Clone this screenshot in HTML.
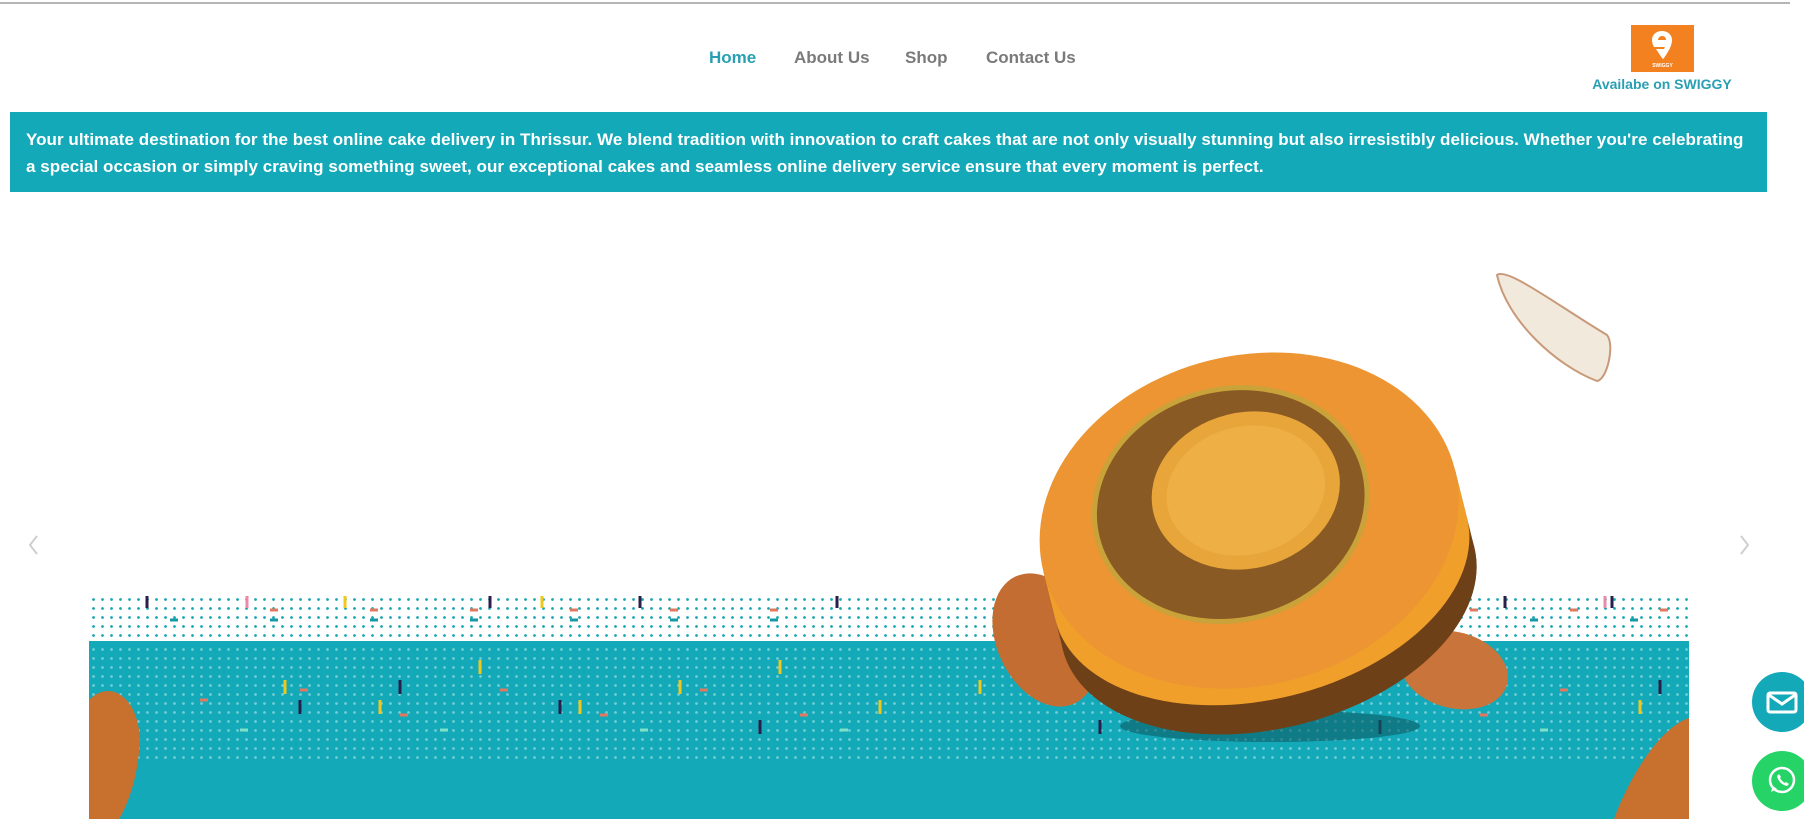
<!DOCTYPE html>
<html><head><meta charset="utf-8"><style>
*{margin:0;padding:0;box-sizing:border-box}
body{width:1804px;height:819px;overflow:hidden;background:#fff;font-family:"Liberation Sans",sans-serif;position:relative}
.topline{position:absolute;left:0;top:2px;width:1790px;height:2px;background:#b5b5b5}
.nav a{position:absolute;top:48px;font-size:17px;font-weight:bold;color:#7a7a7a;text-decoration:none}
.banner{position:absolute;left:10px;top:112px;width:1757px;height:80px;background:#14a9b8;color:#fff;font-weight:bold;font-size:17px;line-height:27px;padding:14px 16px 0 16px;letter-spacing:0.05px}
.swig{position:absolute;left:1631px;top:25px;width:63px;height:47px;background:#f48120}
.avail{position:absolute;left:1580px;top:76px;width:164px;text-align:center;color:#2a9fb3;font-size:14px;font-weight:bold}
.band{position:absolute;left:89px;top:641px;width:1600px;height:178px;background:#13a9b9}
.dots1{position:absolute;left:89px;top:595px;width:1600px;height:46px;
background-image:radial-gradient(circle,#1fa9b5 1.2px,transparent 1.6px);background-size:9px 9px}
.dots2{position:absolute;left:89px;top:645px;width:1600px;height:115px;
background-image:radial-gradient(circle,rgba(255,255,255,.4) 1.2px,transparent 1.6px);background-size:9px 9px}
.circ{position:absolute;width:60px;height:60px;border-radius:50%;left:1752px}
</style></head><body>
<div class="topline"></div>
<div class="nav">
<a style="left:709px;color:#2a9fb3">Home</a>
<a style="left:794px">About Us</a>
<a style="left:905px">Shop</a>
<a style="left:986px">Contact Us</a>
</div>
<div class="swig">
<svg width="63" height="47" viewBox="0 0 63 47"><path d="M31 6c-6 0-10 4-10 9 0 3 1 5 2 7h10c1 0 1 1 0 2h-8l6 9c1 1 2 1 2 0 4-6 8-12 8-18 0-5-4-9-10-9zm-4 9c0-2 2-4 4-4 3 0 4 2 4 4h-8z" fill="#fff"/><text x="31.5" y="42" font-size="5" fill="#fff" text-anchor="middle" font-weight="bold" font-family="Liberation Sans">SWIGGY</text></svg>
</div>
<div class="avail">Availabe on SWIGGY</div>
<div class="banner">Your ultimate destination for the best online cake delivery in Thrissur. We blend tradition with innovation to craft cakes that are not only visually stunning but also irresistibly delicious. Whether you're celebrating a special occasion or simply craving something sweet, our exceptional cakes and seamless online delivery service ensure that every moment is perfect.</div>
<div class="dots1"></div>
<div class="band"></div>
<div class="dots2"></div>
<svg style="position:absolute;left:0;top:0" width="1804" height="819">
<g stroke-width="3">
<path d="M147 596v12M490 596v12M640 596v12M837 596v12M1505 596v12M1612 596v12" stroke="#2a1e4a"/>
<path d="M247 596v12M1605 596v12" stroke="#e88aaa"/>
<path d="M345 596v12M542 596v12" stroke="#f0c81c"/>
<path d="M270 610h8M370 610h8M470 610h8M570 610h8M670 610h8M770 610h8M1470 610h8M1570 610h8M1660 610h8" stroke="#e2785f"/>
<path d="M170 620h8M270 620h8M370 620h8M470 620h8M570 620h8M670 620h8M770 620h8M1530 620h8M1630 620h8" stroke="#159aa5"/>
<path d="M285 680v14M380 700v14M480 660v14M580 700v14M680 680v14M780 660v14M880 700v14M980 680v14M1640 700v14" stroke="#f0c81c"/>
<path d="M300 700v14M400 680v14M560 700v14M760 720v14M1100 720v14M1380 720v14M1660 680v14" stroke="#2a1e4a"/>
<path d="M200 700h8M300 690h8M400 715h8M500 690h8M600 715h8M700 690h8M800 715h8M1480 715h8M1560 690h8" stroke="#e2785f"/>
<path d="M240 730h8M440 730h8M640 730h8M840 730h8M1540 730h8" stroke="#7de0c8"/>
</g>
<path d="M89 700c20-20 45-5 50 30 3 30-8 70-20 89h-30z" fill="#c8702e"/>
<path d="M1689 718c-30 10-60 60-75 101h75z" fill="#c8702e"/>
<ellipse cx="1045" cy="640" rx="48" ry="70" transform="rotate(-25 1045 640)" fill="#c46d32"/>
<ellipse cx="1454" cy="670" rx="55" ry="38" transform="rotate(15 1454 670)" fill="#c8743a"/>
<ellipse cx="1270" cy="726" rx="150" ry="16" fill="#0b5d66" opacity=".6"/>
<g transform="rotate(-14 1254 540)">
<path d="M1042 520 L1042 600 A212 130 0 0 0 1466 600 L1466 520 Z" fill="#7a4a1c"/>
<ellipse cx="1254" cy="600" rx="212" ry="130" fill="#6e4018"/>
<path d="M1042 520 L1042 570 A212 130 0 0 0 1466 570 L1466 520 Z" fill="#f0a02a"/>
<ellipse cx="1254" cy="520" rx="212" ry="165" fill="#ec9532"/>
<ellipse cx="1240" cy="500" rx="140" ry="118" fill="#c9a23a"/>
<ellipse cx="1240" cy="500" rx="135" ry="113" fill="#8a5a24"/>
<ellipse cx="1258" cy="490" rx="95" ry="78" fill="#e8a63a"/>
<ellipse cx="1258" cy="490" rx="80" ry="64" fill="#f2b84c" opacity=".6"/>
</g>
<path d="M1497 275c10-8 60 30 110 60 8 10 0 45-10 46-40-15-90-60-100-106z" fill="#f1eadc" stroke="#c99a7a" stroke-width="2"/>
<path d="M37 536l-7 9 7 9" stroke="#cfcfcf" stroke-width="2" fill="none"/>
<path d="M1741 536l7 9-7 9" stroke="#cfcfcf" stroke-width="2" fill="none"/>
</svg>
<div class="circ" style="top:672px;background:#14a9b8"><svg width="60" height="60"><rect x="16" y="21" width="28" height="19" rx="2" stroke="#fff" stroke-width="3" fill="none"/><path d="M17 23l13 9 13-9" stroke="#fff" stroke-width="3" fill="none"/></svg></div>
<div class="circ" style="top:751px;background:#25d366"><svg width="60" height="60"><circle cx="30" cy="29" r="12" stroke="#fff" stroke-width="2.5" fill="none"/><path d="M19 41l2-6 4 3z" fill="#fff"/><path d="M25 25c1 5 5 9 10 10l2-2-3-2-1 1c-2-1-4-3-5-5l1-1-2-3z" fill="#fff"/></svg></div>
</body></html>
